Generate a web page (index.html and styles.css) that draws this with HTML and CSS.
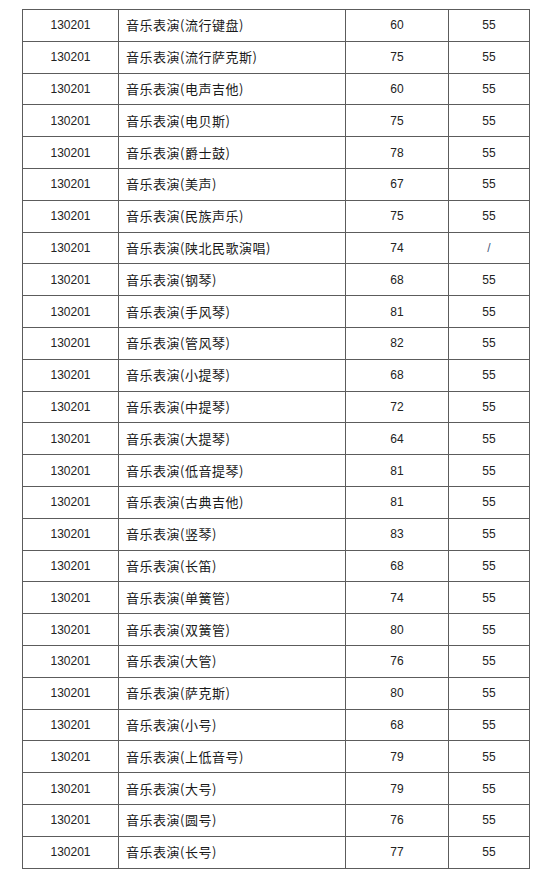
FILE: index.html
```html
<!DOCTYPE html>
<html lang="zh">
<head>
<meta charset="utf-8">
<title>音乐表演</title>
<link rel="stylesheet" href="styles.css">
</head>
<body>
<table class="score-table">
<colgroup><col class="c-code"><col class="c-name"><col class="c-a"><col class="c-b"></colgroup>
<tbody>
<tr><td class="num">130201</td><td class="name">音乐表演(流行键盘)</td><td class="num">60</td><td class="num">55</td></tr>
<tr><td class="num">130201</td><td class="name">音乐表演(流行萨克斯)</td><td class="num">75</td><td class="num">55</td></tr>
<tr><td class="num">130201</td><td class="name">音乐表演(电声吉他)</td><td class="num">60</td><td class="num">55</td></tr>
<tr><td class="num">130201</td><td class="name">音乐表演(电贝斯)</td><td class="num">75</td><td class="num">55</td></tr>
<tr><td class="num">130201</td><td class="name">音乐表演(爵士鼓)</td><td class="num">78</td><td class="num">55</td></tr>
<tr><td class="num">130201</td><td class="name">音乐表演(美声)</td><td class="num">67</td><td class="num">55</td></tr>
<tr><td class="num">130201</td><td class="name">音乐表演(民族声乐)</td><td class="num">75</td><td class="num">55</td></tr>
<tr><td class="num">130201</td><td class="name">音乐表演(陕北民歌演唱)</td><td class="num">74</td><td class="num slash">/</td></tr>
<tr><td class="num">130201</td><td class="name">音乐表演(钢琴)</td><td class="num">68</td><td class="num">55</td></tr>
<tr><td class="num">130201</td><td class="name">音乐表演(手风琴)</td><td class="num">81</td><td class="num">55</td></tr>
<tr><td class="num">130201</td><td class="name">音乐表演(管风琴)</td><td class="num">82</td><td class="num">55</td></tr>
<tr><td class="num">130201</td><td class="name">音乐表演(小提琴)</td><td class="num">68</td><td class="num">55</td></tr>
<tr><td class="num">130201</td><td class="name">音乐表演(中提琴)</td><td class="num">72</td><td class="num">55</td></tr>
<tr><td class="num">130201</td><td class="name">音乐表演(大提琴)</td><td class="num">64</td><td class="num">55</td></tr>
<tr><td class="num">130201</td><td class="name">音乐表演(低音提琴)</td><td class="num">81</td><td class="num">55</td></tr>
<tr><td class="num">130201</td><td class="name">音乐表演(古典吉他)</td><td class="num">81</td><td class="num">55</td></tr>
<tr><td class="num">130201</td><td class="name">音乐表演(竖琴)</td><td class="num">83</td><td class="num">55</td></tr>
<tr><td class="num">130201</td><td class="name">音乐表演(长笛)</td><td class="num">68</td><td class="num">55</td></tr>
<tr><td class="num">130201</td><td class="name">音乐表演(单簧管)</td><td class="num">74</td><td class="num">55</td></tr>
<tr><td class="num">130201</td><td class="name">音乐表演(双簧管)</td><td class="num">80</td><td class="num">55</td></tr>
<tr><td class="num">130201</td><td class="name">音乐表演(大管)</td><td class="num">76</td><td class="num">55</td></tr>
<tr><td class="num">130201</td><td class="name">音乐表演(萨克斯)</td><td class="num">80</td><td class="num">55</td></tr>
<tr><td class="num">130201</td><td class="name">音乐表演(小号)</td><td class="num">68</td><td class="num">55</td></tr>
<tr><td class="num">130201</td><td class="name">音乐表演(上低音号)</td><td class="num">79</td><td class="num">55</td></tr>
<tr><td class="num">130201</td><td class="name">音乐表演(大号)</td><td class="num">79</td><td class="num">55</td></tr>
<tr><td class="num">130201</td><td class="name">音乐表演(圆号)</td><td class="num">76</td><td class="num">55</td></tr>
<tr><td class="num">130201</td><td class="name">音乐表演(长号)</td><td class="num">77</td><td class="num">55</td></tr>
</tbody>
</table>
</body>
</html>
```
FILE: styles.css
```css
html, body {
  margin: 0;
  padding: 0;
  background: #ffffff;
}

body {
  padding: 9px 0 0 22px;
  font-family: "Liberation Sans", "Noto Sans CJK SC", sans-serif;
  color: #1a1a1a;
}

.score-table {
  border-collapse: collapse;
  table-layout: fixed;
  width: 507px;
}

.c-code { width: 96px; }
.c-name { width: 227px; }
.c-a { width: 103px; }
.c-b { width: 81px; }

.score-table td {
  border: 1px solid #5c5c5c;
  height: 30.8px;
  padding: 0;
  vertical-align: middle;
  line-height: 14px;
}

.num {
  text-align: center;
  font-size: 12px;
  color: #222;
}

.name {
  text-align: left;
  padding-left: 7px !important;
  font-family: "Noto Sans CJK SC", sans-serif;
  font-size: 13px;
  letter-spacing: 0.5px;
}

.slash {
  color: #4a5a7a;
}
```
